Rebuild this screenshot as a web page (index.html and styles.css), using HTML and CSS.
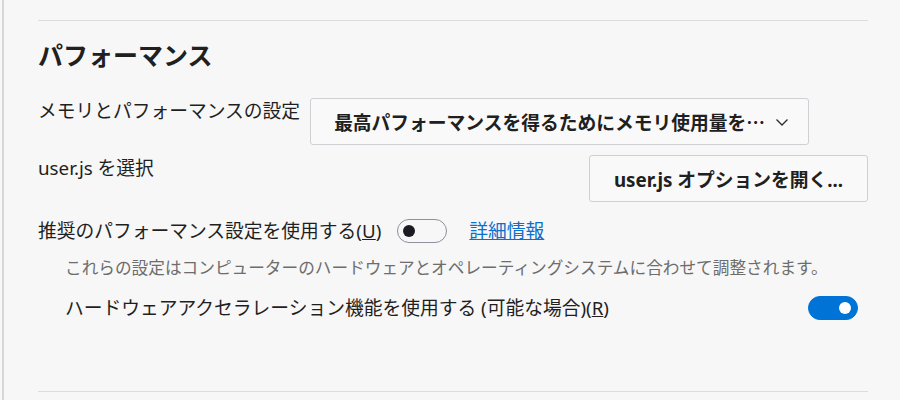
FILE: index.html
```html
<!DOCTYPE html>
<html lang="ja">
  <head>
    <meta charset="utf-8" />
    <title>パフォーマンス</title>
    <link rel="stylesheet" href="styles.css">
  </head>
  <body>
    <div class="pane">
      <hr class="separator" />

      <section class="group">
        <h2 class="group-title">パフォーマンス</h2>

        <div class="row row-top">
          <span class="label">メモリとパフォーマンスの設定</span>
          <button class="dropdown">
            <span class="dropdown-text">最高パフォーマンスを得るためにメモリ使用量を…</span>
            <svg class="chevron" width="14" height="10" viewBox="0 0 14 10">
              <polyline points="1.5,2.5 7,8 12.5,2.5" fill="none" stroke="#2b2b2b" stroke-width="1.3" />
            </svg>
          </button>
        </div>

        <div class="row row-top row-split">
          <span class="label">user.js を選択</span>
          <button class="action">user.js オプションを開く...</button>
        </div>

        <div class="row row-center">
          <span class="label">推奨のパフォーマンス設定を使用する(<u>U</u>)</span>
          <span class="toggle"></span>
          <a class="link" href="#">詳細情報</a>
        </div>

        <p class="description">これらの設定はコンピューターのハードウェアとオペレーティングシステムに合わせて調整されます。</p>

        <div class="row row-center row-split sub-option">
          <span class="label">ハードウェアアクセラレーション機能を使用する (可能な場合)(<u>R</u>)</span>
          <span class="toggle on"></span>
        </div>
      </section>

      <hr class="separator bottom" />
    </div>
  </body>
</html>
```

FILE: styles.css
```css
html {
  height: 100%;
}

body {
  margin: 0;
  height: 100%;
  background: #f7f7f7;
  color: #1f1f1f;
  font-family: "Noto Sans", "Noto Sans CJK JP", sans-serif;
  font-size: 18.75px;
}

.pane {
  margin-left: 2px;
  border-left: 2px solid #d7d7d7;
  height: 100%;
  box-sizing: border-box;
  padding: 20px 30px 0 34px;
}

.separator {
  margin: 0;
  border: 0;
  border-top: 1px solid #dcdcdf;
  width: 830px;
}

.separator.bottom {
  margin-top: 70px;
}

.group {
  width: 830px;
}

.group-title {
  margin: 17px 0 0;
  font-size: 25px;
  line-height: 34px;
  font-weight: 700;
  color: #202020;
}

.row {
  display: flex;
}

.row-top {
  align-items: flex-start;
}

.row-center {
  align-items: center;
}

.row-split {
  justify-content: space-between;
}

.label {
  line-height: 26px;
  white-space: nowrap;
}

.row:nth-of-type(1) {
  margin-top: 26px;
}

.dropdown,
.action {
  font: inherit;
  font-weight: 700;
  color: #202020;
  background: #f9f9f9;
  border: 1px solid #cfcfd4;
  border-radius: 3px;
  box-sizing: border-box;
  height: 47px;
  padding: 0 19px;
  margin: 0;
}

.dropdown {
  display: flex;
  align-items: center;
  gap: 10px;
  width: 499px;
  margin-left: 10px;
  padding-left: 23px;
  white-space: nowrap;
}

/* the select keeps the CJK ellipsis, centred on the line */
.dropdown-text {
  font-family: "Noto Sans CJK JP", sans-serif;
}

.chevron {
  flex: none;
}

.row-split.row-top {
  margin-top: 10px;
}

.action {
  width: 279px;
  height: 47px;
}

.row-center {
  margin-top: 16px;
}

.toggle {
  position: relative;
  flex: none;
  width: 50px;
  height: 24px;
  box-sizing: border-box;
  border: 1px solid #8f8f9d;
  border-radius: 12px;
  margin-left: 16px;
}

.toggle::after {
  content: "";
  position: absolute;
  top: 5px;
  left: 5px;
  width: 12px;
  height: 12px;
  border-radius: 50%;
  background: #1c1b22;
}

.toggle.on {
  background: #0074d6;
  border-color: #0074d6;
}

.toggle.on::after {
  left: auto;
  right: 6px;
  background: #ffffff;
}

.link {
  margin-left: 22px;
  color: #0b6fcc;
  line-height: 26px;
}

.description {
  margin: 13px 0 0 27px;
  font-size: 16.67px;
  line-height: 22px;
  color: #6d6d6d;
}

.sub-option {
  margin-top: 16px;
  padding: 0 10px 0 27px;
}
```
